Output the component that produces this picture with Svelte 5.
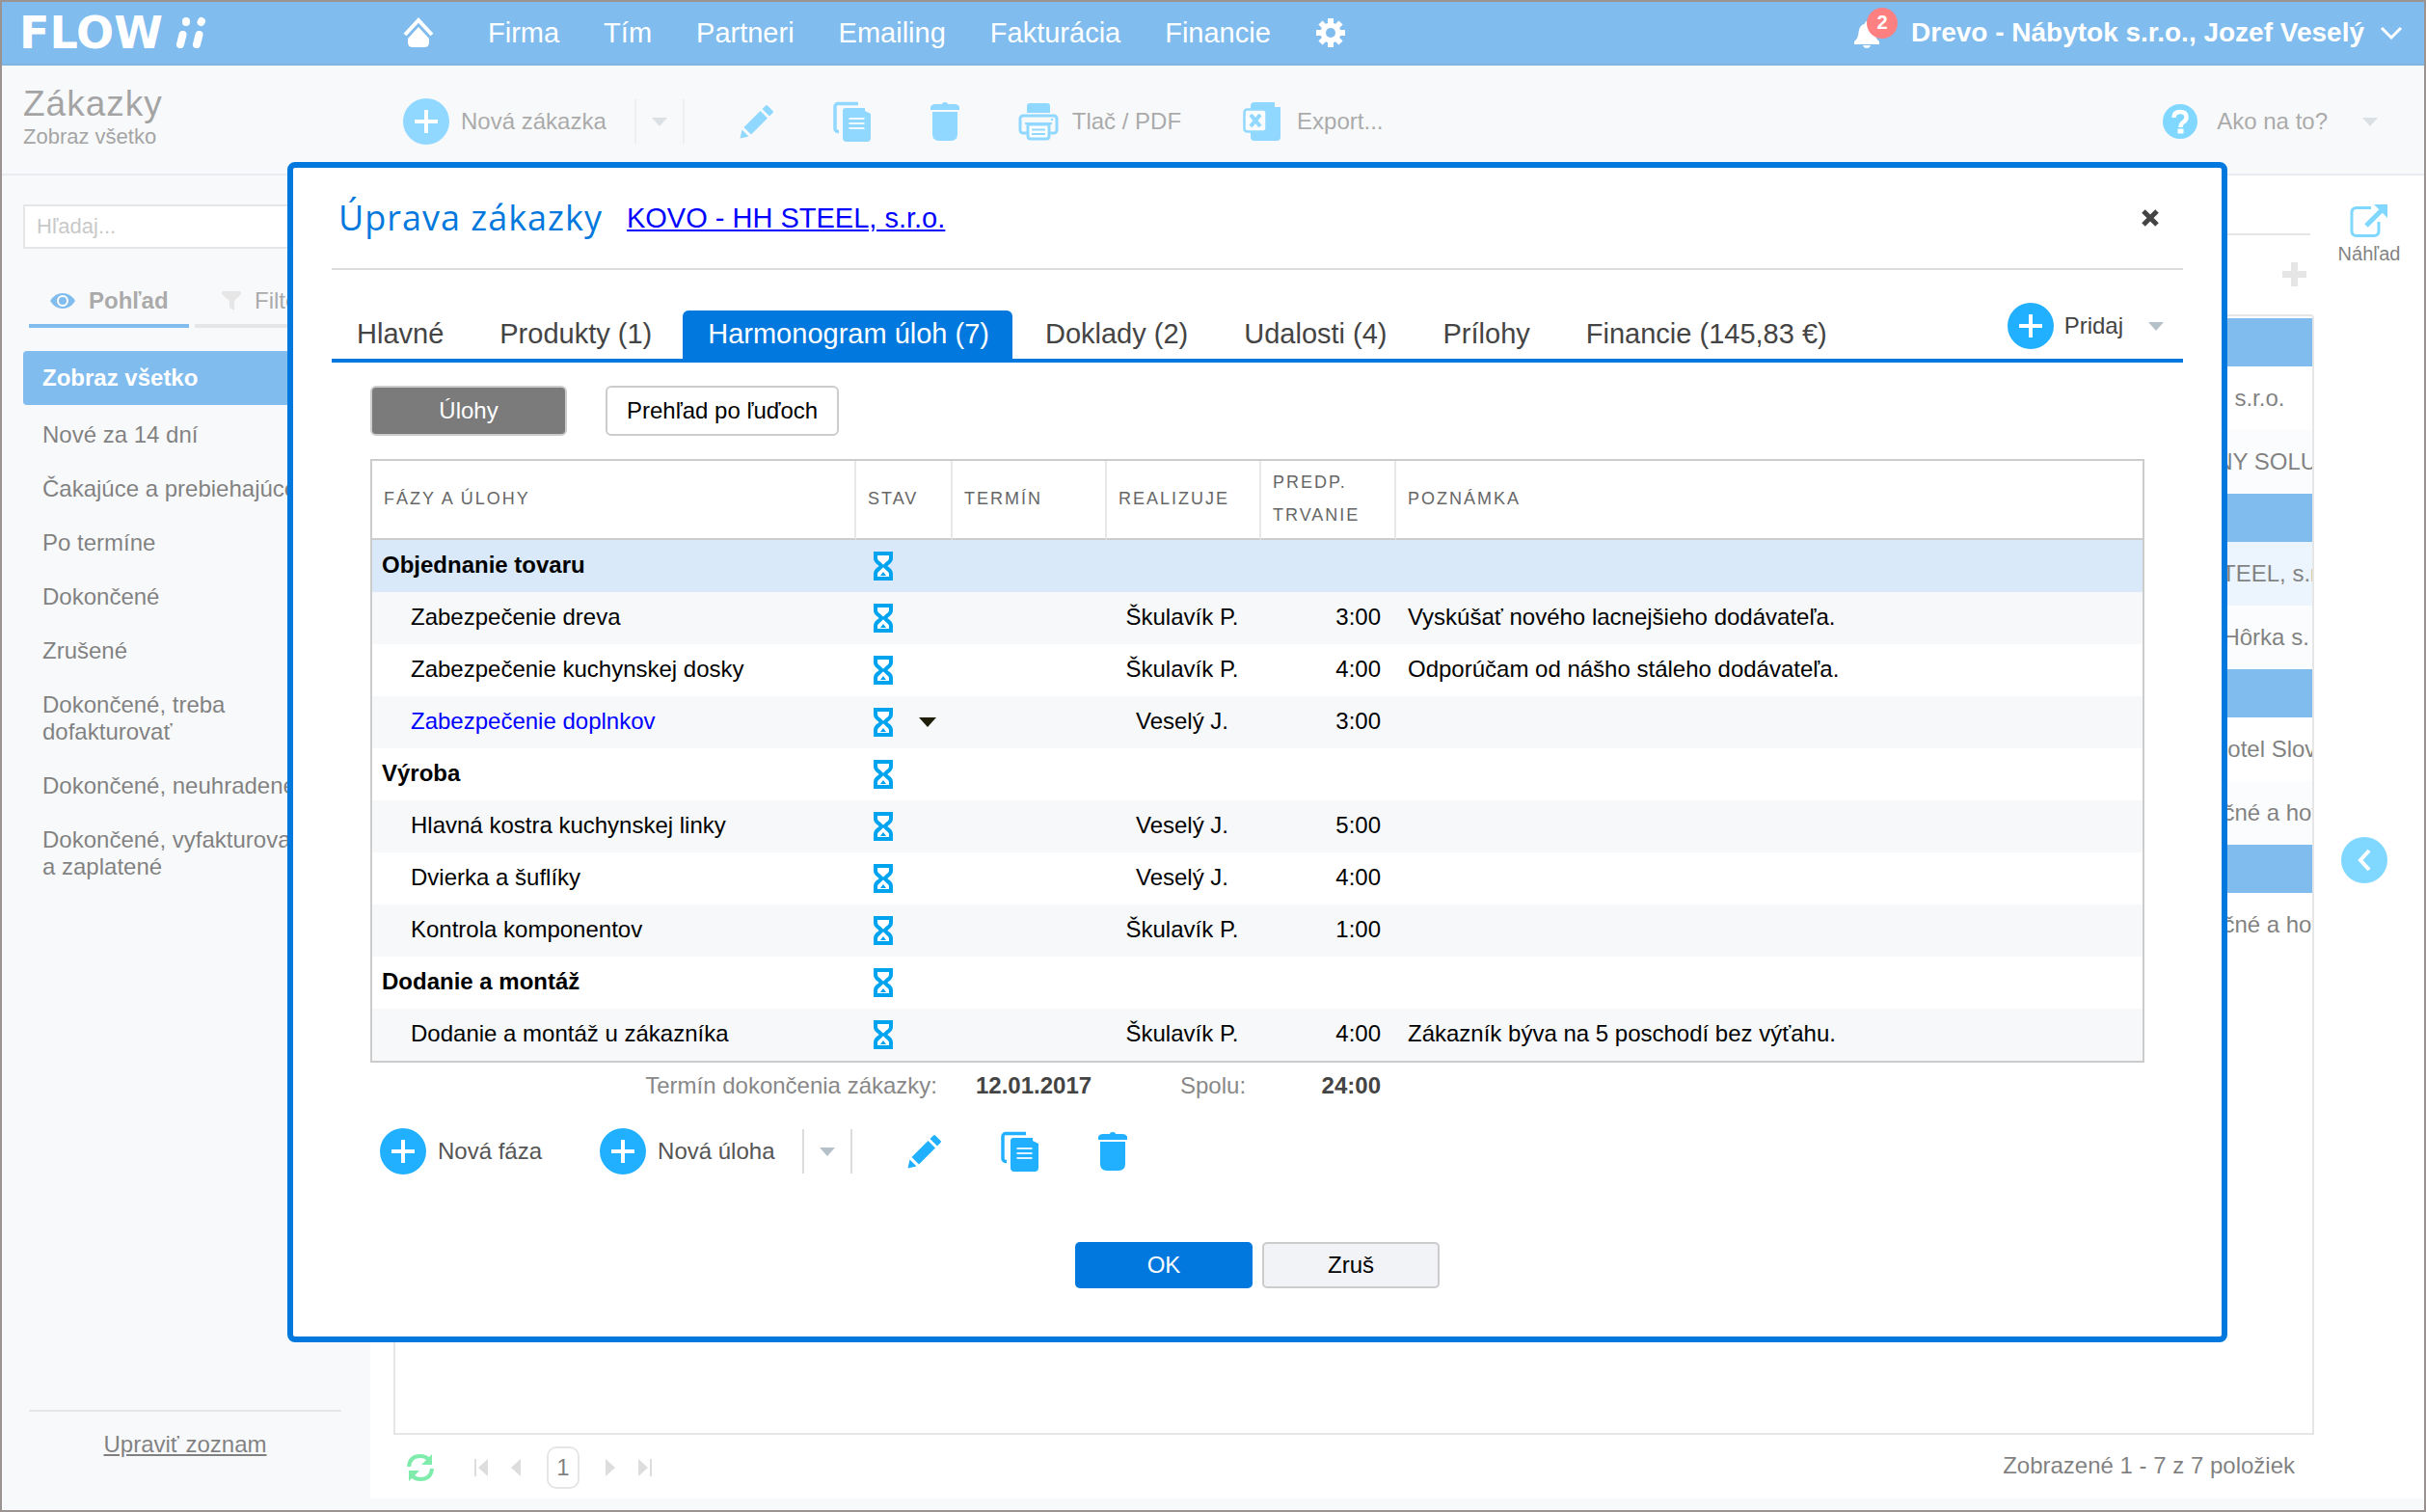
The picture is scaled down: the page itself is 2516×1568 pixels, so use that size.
<script>
  const menu = ["Firma", "Tím", "Partneri", "Emailing", "Fakturácia", "Financie"];

  const views = [
    "Zobraz všetko",
    "Nové za 14 dní",
    "Čakajúce a prebiehajúce",
    "Po termíne",
    "Dokončené",
    "Zrušené",
    "Dokončené, treba dofakturovať",
    "Dokončené, neuhradené",
    "Dokončené, vyfakturované a zaplatené",
  ];

  const groups = [
    [{ name: "Stavby Novák, s.r.o." }, { name: "ABC COMPANY SOLUTIONS" }],
    [{ name: "KOVO - HH STEEL, s.r.o.", selected: true }, { name: "Autodoprava, Hôrka s. r.o." }],
    [{ name: "Wellness 24 Hotel Slovan" }, { name: "Max Reštauračné a hotelové" }],
    [{ name: "Max Reštauračné a hotelové" }],
  ];

  const tabs = [
    "Hlavné",
    "Produkty (1)",
    "Harmonogram úloh (7)",
    "Doklady (2)",
    "Udalosti (4)",
    "Prílohy",
    "Financie (145,83 €)",
  ];

  const rows = [
    { name: "Objednanie tovaru", phase: true, selected: true },
    { name: "Zabezpečenie dreva", who: "Škulavík P.", time: "3:00", note: "Vyskúšať nového lacnejšieho dodávateľa." },
    { name: "Zabezpečenie kuchynskej dosky", who: "Škulavík P.", time: "4:00", note: "Odporúčam od nášho stáleho dodávateľa." },
    { name: "Zabezpečenie doplnkov", who: "Veselý J.", time: "3:00", hover: true },
    { name: "Výroba", phase: true },
    { name: "Hlavná kostra kuchynskej linky", who: "Veselý J.", time: "5:00" },
    { name: "Dvierka a šuflíky", who: "Veselý J.", time: "4:00" },
    { name: "Kontrola komponentov", who: "Škulavík P.", time: "1:00" },
    { name: "Dodanie a montáž", phase: true },
    { name: "Dodanie a montáž u zákazníka", who: "Škulavík P.", time: "4:00", note: "Zákazník býva na 5 poschodí bez výťahu." },
  ];

  let view = $state(views[0]);
  let tab = $state(tabs[2]);
  let search = $state("");
</script>

{#snippet plus()}
  <svg width="48" height="48" viewBox="0 0 48 48">
    <circle cx="24" cy="24" r="24" fill="#21b0ff" />
    <path d="M24 12v24M12 24h24" stroke="#fff" stroke-width="4" />
  </svg>
{/snippet}

{#snippet caret()}
  <svg width="16" height="9" viewBox="0 0 16 9"><path d="M0 0h16L8 9z" fill="#b4c1c9" /></svg>
{/snippet}

{#snippet pencil()}
  <svg width="36" height="36" viewBox="0 0 36 36" fill="#21b0ff">
    <path d="M27 1.500l1.500-.5 6.500 6.500-.5 1.500-3.500 3.500-7.500-7.500z" />
    <path d="M21.500 7l7.500 7.500L12 31.500 4.500 24z" />
    <path d="M2.500 26.500l7 7L.500 35.500z" />
  </svg>
{/snippet}

{#snippet copy()}
  <svg width="40" height="42" viewBox="0 0 40 42">
    <path d="M26 2.500H5a3 3 0 0 0-3 3v23a3 3 0 0 0 3 3h1" fill="none" stroke="#21b0ff" stroke-width="3.500" />
    <path d="M13 7h20v3l6 3v25a4 4 0 0 1-4 4H14a4 4 0 0 1-4-4V10a3 3 0 0 1 3-3z" fill="#21b0ff" />
    <path d="M16.500 18h16M16.500 23h16M16.500 28h16" stroke="#fff" stroke-opacity=".85" stroke-width="2" />
  </svg>
{/snippet}

{#snippet trash()}
  <svg width="30" height="42" viewBox="0 0 30 42" fill="#21b0ff">
    <path d="M0 9V6q1-3 5-3h7q0-2 3-2t3 2h7q4 0 5 3v3z" />
    <path d="M2 11h26v23q0 7-7 7H9q-7 0-7-7z" />
  </svg>
{/snippet}

{#snippet hourglass()}
  <svg width="22" height="32" viewBox="0 0 22 32" role="img" aria-label="Čaká">
    <path d="M3 3h16v5q0 3-4 5.500L12.500 16l2.500 2.500Q19 21 19 24v5H3v-5q0-3 4-5.500L9.500 16 7 13.500Q3 11 3 8z" fill="#fff" stroke="#00a3ee" stroke-width="4" />
    <path d="M1 3h20M1 29h20" stroke="#00a3ee" stroke-width="4" />
    <path d="M11 22l3 4H8z" fill="#00a3ee" />
  </svg>
{/snippet}

<div class="page">
  <header>
    <a class="logo" href="/" aria-label="FLOWii">
      <span>FLOW</span>
      <svg width="34" height="34" viewBox="0 0 34 34" stroke="#fff" stroke-linecap="round" stroke-width="8">
        <path d="M12 5v1M28 5l-.500 1M8.500 19L6 29M25.500 19L23 29" />
      </svg>
    </a>
    <nav>
      <a class="home" href="/" aria-label="Domov">
        <svg width="32" height="32" viewBox="0 0 32 32">
          <path d="M2 18L16 3l14 15" fill="none" stroke="#fff" stroke-width="4" />
          <path d="M16 10l11 12v4q0 5-5 5H10q-5 0-5-5v-4z" fill="#fff" />
        </svg>
      </a>
      {#each menu as item}
        <a href="/">{item}</a>
      {/each}
      <a href="/" aria-label="Nastavenia">
        <svg width="32" height="32" viewBox="0 0 32 32">
          <g stroke="#fff" stroke-width="6">
            <path d="M16 1v30M1 16h30M5.500 5.500l21 21M26.500 5.500l-21 21" />
          </g>
          <circle cx="16" cy="16" r="10.500" fill="#fff" />
          <circle cx="16" cy="16" r="5" fill="#0078dd" />
        </svg>
      </a>
    </nav>
    <button class="bell" aria-label="Upozornenia">
      <svg width="28" height="28" viewBox="0 0 28 28" fill="#fff">
        <path d="M14 0q2 0 2 2.500 6 2 6.500 9T27 21v3H1v-3q4-2.500 4.500-9.500T12 2.500Q12 0 14 0z" />
        <path d="M10 25h8q-1 3-4 3t-4-3z" />
      </svg>
      <span class="badge">2</span>
    </button>
    <button class="user">
      Drevo - Nábytok s.r.o., Jozef Veselý
      <svg width="24" height="14" viewBox="0 0 24 14"><path d="M2 2l10 10L22 2" fill="none" stroke="#fff" stroke-width="3" /></svg>
    </button>
  </header>

  <div class="toolbar">
    <div class="heading">
      <h1>Zákazky</h1>
      <p>Zobraz všetko</p>
    </div>
    <button class="labelled">{@render plus()}Nová zákazka</button>
    <button class="drop" aria-label="Ďalšie možnosti">{@render caret()}</button>
    <div class="tools">
      <button aria-label="Upraviť">{@render pencil()}</button>
      <button aria-label="Kopírovať">{@render copy()}</button>
      <button aria-label="Vymazať">{@render trash()}</button>
    </div>
    <button class="labelled print">
      <svg width="42" height="40" viewBox="0 0 42 40">
        <path d="M9 11V4q0-3 3-3h18q3 0 3 3v7z" fill="#21b0ff" />
        <rect x="2" y="14" width="38" height="18" rx="3" fill="none" stroke="#21b0ff" stroke-width="3" />
        <path d="M7 22h28M34 18h2" stroke="#21b0ff" stroke-width="2" />
        <path d="M10 23h22v12q0 3-3 3H13q-3 0-3-3z" fill="#fff" stroke="#21b0ff" stroke-width="3" />
        <path d="M14 28.500h14M14 33h14" stroke="#21b0ff" stroke-width="2" />
      </svg>
      Tlač / PDF
    </button>
    <button class="labelled export">
      <svg width="40" height="42" viewBox="0 0 40 42">
        <path d="M12 1h21v5h6v31q0 4-4 4H12q-4 0-4-4V5q0-4 4-4z" fill="#21b0ff" />
        <rect x="1.500" y="8.500" width="23" height="23" rx="3" fill="#f4f8fc" stroke="#21b0ff" stroke-width="2.500" />
        <path d="M8 14l10 12M18 14L8 26" stroke="#21b0ff" stroke-width="4" />
      </svg>
      Export...
    </button>
    <button class="labelled help">
      <svg width="36" height="36" viewBox="0 0 36 36">
        <circle cx="18" cy="18" r="18" fill="#00aeff" />
        <path d="M11.500 14q0-6 6.500-6t6.500 5.500q0 3-3 5T18.500 24" fill="none" stroke="#fff" stroke-width="4.500" />
        <path d="M15.500 25.500h6v5h-6z" fill="#fff" />
      </svg>
      <span>Ako na to?</span>
      {@render caret()}
    </button>
  </div>

  <div class="content">
    <aside>
      <input type="search" placeholder="Hľadaj..." aria-label="Hľadaj" bind:value={search} />
      <div class="switch">
        <button class="on">
          <svg width="26" height="18" viewBox="0 0 26 18">
            <path d="M0 9Q5 1 13 1t13 8q-5 8-13 8T0 9z" fill="#0078dd" />
            <circle cx="13" cy="9" r="5" fill="#0078dd" stroke="#fff" stroke-width="2" />
          </svg>
          Pohľad
        </button>
        <button>
          <svg width="20" height="20" viewBox="0 0 20 20"><path d="M0 0h20v3l-7 7v10l-5-3v-7L0 3z" fill="#ccc" /></svg>
          Filter
        </button>
      </div>
      <ul>
        {#each views as item}
          <li><button class:active={item === view} onclick={() => (view = item)}>{item}</button></li>
        {/each}
      </ul>
      <div class="edit-list"><a href="/">Upraviť zoznam</a></div>
    </aside>

    <main>
      <div class="list">
        <div class="list-top"></div>
        <div class="list-filter">
          <button aria-label="Pridať filter">
            <svg width="25" height="25" viewBox="0 0 25 25"><path d="M12.500 0v25M0 12.500h25" stroke="#ccc" stroke-width="7" /></svg>
          </button>
        </div>
        <div class="grid">
          <table>
            <colgroup><col /><col class="client" /></colgroup>
            {#each groups as group}
              <tbody>
                <tr class="band"><td colspan="2"></td></tr>
                {#each group as order}
                  <tr class:selected={order.selected}><td></td><td>{order.name}</td></tr>
                {/each}
              </tbody>
            {/each}
          </table>
        </div>
        <div class="pager">
          <button aria-label="Obnoviť">
            <svg width="28" height="30" viewBox="0 0 28 30" fill="none" stroke="#00d858" stroke-width="4">
              <path d="M2 14Q3 3 14 3q5 0 8 3M26 16q-1 11-12 11-5 0-8-3" />
              <path d="M26 1v11H15zM2 29V18h11z" fill="#00d858" stroke="none" />
            </svg>
          </button>
          <button class="first" aria-label="Prvá"><svg width="14" height="18" viewBox="0 0 14 18" fill="#bbb"><path d="M0 0h2v18H0zM14 0v18L4 9z" /></svg></button>
          <button class="prev" aria-label="Predchádzajúca"><svg width="10" height="18" viewBox="0 0 10 18" fill="#bbb"><path d="M10 0v18L0 9z" /></svg></button>
          <button class="current">1</button>
          <button aria-label="Nasledujúca"><svg width="10" height="18" viewBox="0 0 10 18" fill="#bbb"><path d="M0 0v18l10-9z" /></svg></button>
          <button class="last" aria-label="Posledná"><svg width="14" height="18" viewBox="0 0 14 18" fill="#bbb"><path d="M12 0h2v18h-2zM0 0v18l10-9z" /></svg></button>
          <span>Zobrazené 1 - 7 z 7 položiek</span>
        </div>
      </div>
      <div class="rail">
        <button class="preview">
          <svg width="40" height="36" viewBox="0 0 40 36">
            <path d="M22 4.500H7q-5 0-5 5v19q0 5 5 5h18q5 0 5-5V19" fill="none" stroke="#00aeff" stroke-width="3" />
            <path d="M17 23L33 7" stroke="#00aeff" stroke-width="5" />
            <path d="M25 1h14v14z" fill="#00aeff" />
          </svg>
          Náhľad
        </button>
        <button class="toggle" aria-label="Rozbaliť">
          <svg width="14" height="24" viewBox="0 0 14 24"><path d="M12 2L3 12l9 10" fill="none" stroke="#fff" stroke-width="4" /></svg>
        </button>
      </div>
    </main>
  </div>

  <div class="overlay">
    <div class="modal" role="dialog" aria-labelledby="dialog-title">
      <div class="modal-head">
        <h2 id="dialog-title">Úprava zákazky</h2>
        <a href="/">KOVO - HH STEEL, s.r.o.</a>
        <button aria-label="Zavrieť">
          <svg width="18" height="18" viewBox="0 0 18 18"><path d="M2 2l14 14M16 2L2 16" stroke="#444" stroke-width="5" /></svg>
        </button>
      </div>

      <div class="tabs">
        {#each tabs as item}
          <button class:active={item === tab} onclick={() => (tab = item)}>{item}</button>
        {/each}
        <button class="add">{@render plus()}<span>Pridaj</span>{@render caret()}</button>
      </div>

      <div class="modal-body">
        <div class="modes">
          <button class="mode on">Úlohy</button>
          <button class="mode">Prehľad po ľuďoch</button>
        </div>

        <table class="tasks">
          <colgroup>
            <col class="c-name" /><col class="c-state" /><col class="c-date" />
            <col class="c-who" /><col class="c-time" /><col />
          </colgroup>
          <thead>
            <tr>
              <th>Fázy a úlohy</th>
              <th>Stav</th>
              <th>Termín</th>
              <th>Realizuje</th>
              <th>Predp. trvanie</th>
              <th>Poznámka</th>
            </tr>
          </thead>
          <tbody>
            {#each rows as row}
              <tr class:phase={row.phase} class:selected={row.selected} class:hover={row.hover}>
                <td>{row.name}</td>
                <td class="state">
                  <div>
                    {@render hourglass()}
                    {#if row.hover}
                      <svg width="18" height="10" viewBox="0 0 18 10"><path d="M0 0h18L9 10z" fill="#1e1e0a" /></svg>
                    {/if}
                  </div>
                </td>
                <td></td>
                <td class="who">{row.who ?? ""}</td>
                <td class="time">{row.time ?? ""}</td>
                <td>{row.note ?? ""}</td>
              </tr>
            {/each}
          </tbody>
        </table>

        <div class="summary">
          <span>Termín dokončenia zákazky:</span>
          <strong>12.01.2017</strong>
          <span>Spolu:</span>
          <strong>24:00</strong>
        </div>

        <div class="actions">
          <button class="labelled">{@render plus()}Nová fáza</button>
          <button class="labelled">{@render plus()}Nová úloha</button>
          <button class="drop" aria-label="Ďalšie možnosti">{@render caret()}</button>
          <div class="tools">
            <button aria-label="Upraviť">{@render pencil()}</button>
            <button aria-label="Kopírovať">{@render copy()}</button>
            <button aria-label="Vymazať">{@render trash()}</button>
          </div>
        </div>
      </div>

      <div class="confirm">
        <button class="ok">OK</button>
        <button class="cancel">Zruš</button>
      </div>
    </div>
  </div>
</div>

<style>
  :global(body) {
    margin: 0;
  }

  .page,
  .page * {
    box-sizing: border-box;
  }

  .page {
    position: relative;
    display: flex;
    flex-direction: column;
    min-height: 100vh;
    border: 2px solid #9b9392;
    background: #fff;
    color: #000;
    font: 24px/28px "Liberation Sans", Arial, sans-serif;
  }

  button {
    display: flex;
    align-items: center;
    padding: 0;
    border: 0;
    background: none;
    color: inherit;
    font: inherit;
    white-space: nowrap;
    cursor: pointer;
  }

  svg {
    display: block;
    flex: none;
  }

  h1,
  h2,
  p,
  ul {
    margin: 0;
    padding: 0;
    font-weight: normal;
    list-style: none;
  }

  header {
    display: flex;
    align-items: center;
    height: 66px;
    padding-right: 22px;
    border-bottom: 2px solid #0068c2;
    background: #0078dd;
    color: #fff;
  }

  .logo {
    display: flex;
    align-items: center;
    gap: 12px;
    width: 416px;
    padding-left: 18px;
    color: #fff;
    font: bold 46px/64px "DejaVu Sans", sans-serif;
    text-decoration: none;
  }

  nav {
    display: flex;
    align-items: center;
    gap: 46px;
    font-size: 29px;
  }

  nav a {
    color: #fff;
    text-decoration: none;
  }

  .home {
    margin-right: 10px;
  }

  .bell {
    position: relative;
    margin-left: auto;
    padding: 4px 20px 0 0;
  }

  .badge {
    position: absolute;
    top: -10px;
    left: 14px;
    width: 32px;
    height: 32px;
    border-radius: 50%;
    background: #f00;
    font: bold 20px/30px "Liberation Sans", Arial, sans-serif;
    text-align: center;
  }

  .user {
    gap: 16px;
    margin-left: 12px;
    font-size: 28px;
    font-weight: bold;
  }

  .toolbar {
    display: flex;
    align-items: center;
    height: 114px;
    padding-top: 4px;
    border-bottom: 2px solid #d2d9e1;
    background: #f1f3f7;
    color: #555;
  }

  .heading {
    width: 416px;
    padding: 0 0 8px 22px;
    color: #484848;
    font-size: 22px;
  }

  h1 {
    font-size: 37px;
    line-height: 40px;
    letter-spacing: 1px;
  }

  .labelled {
    gap: 12px;
  }

  .drop {
    justify-content: center;
    width: 52px;
    height: 46px;
    margin-left: 29px;
    border: solid #dcdcdc;
    border-width: 0 2px;
  }

  .tools {
    display: flex;
    align-items: center;
    gap: 61px;
    margin-left: 57px;
  }

  .print {
    gap: 14px;
    margin-left: 61px;
  }

  .export {
    gap: 16px;
    margin-left: 64px;
  }

  .help {
    gap: 20px;
    margin: 0 48px 0 auto;
  }

  .help span {
    margin-right: 16px;
  }

  .content {
    display: flex;
    flex: 1;
  }

  aside {
    display: flex;
    flex: none;
    flex-direction: column;
    width: 382px;
    padding: 30px 22px 54px;
    background: #f1f3f7;
  }

  input {
    width: 100%;
    height: 46px;
    padding: 0 12px;
    border: 2px solid #ccc;
    background: #fff;
    font: 22px/26px "Liberation Sans", Arial, sans-serif;
  }

  input::placeholder {
    color: #919191;
  }

  .switch {
    display: flex;
    gap: 6px;
    margin: 32px 0 24px 6px;
    color: #555;
  }

  .switch button {
    flex: none;
    gap: 14px;
    width: 166px;
    height: 50px;
    padding: 0 0 2px 28px;
    border-bottom: 4px solid #ccc;
  }

  .switch .on {
    padding-left: 22px;
    border-color: #0078dd;
    font-weight: bold;
  }

  ul {
    flex: 1;
  }

  li button {
    width: 100%;
    padding: 14px 20px;
    text-align: left;
    white-space: normal;
  }

  li .active {
    margin-bottom: 3px;
    border-radius: 4px;
    background: #0078dd;
    color: #fff;
    font-weight: bold;
  }

  .edit-list {
    margin: 0 8px 0 6px;
    padding-top: 20px;
    border-top: 2px solid #ccc;
    text-align: center;
  }

  .edit-list a {
    color: #000;
  }

  main {
    display: flex;
    flex: 1;
    min-width: 0;
    border-bottom: 12px solid #f1f3f7;
  }

  .list {
    display: flex;
    flex: 1;
    flex-direction: column;
    min-width: 0;
    padding-left: 24px;
  }

  .list-top {
    height: 62px;
    margin-right: 4px;
    border-bottom: 2px solid #ccc;
  }

  .list-filter {
    display: flex;
    justify-content: flex-end;
    height: 82px;
    padding: 0 8px 2px 0;
  }

  .grid {
    flex: 1;
    padding-top: 2px;
    border: 2px solid #ccc;
    border-radius: 4px 4px 0 0;
  }

  table {
    width: 100%;
    border-spacing: 0;
    table-layout: fixed;
  }

  td,
  th {
    padding: 0;
  }

  .client {
    width: 242px;
  }

  .grid td {
    height: 66px;
    overflow: hidden;
    white-space: nowrap;
  }

  .grid tr:nth-child(odd) {
    background: #f7f8fb;
  }

  .grid tr.selected {
    background: #d9e8fb;
  }

  .grid tr.band {
    background: #0078dd;
  }

  .grid .band td {
    height: 50px;
  }

  .pager {
    display: flex;
    align-items: center;
    height: 66px;
    padding: 2px 20px 0 14px;
  }

  .pager span {
    margin-left: auto;
    padding-bottom: 4px;
  }

  .first {
    margin-left: 42px;
  }

  .prev,
  .last {
    margin-left: 24px;
  }

  .current {
    justify-content: center;
    width: 34px;
    height: 44px;
    margin: 0 27px;
    border: 2px solid #ccc;
    border-radius: 10px;
  }

  .rail {
    display: flex;
    flex: none;
    flex-direction: column;
    align-items: center;
    width: 114px;
    padding-top: 29px;
  }

  .preview {
    flex-direction: column;
    gap: 2px;
    font-size: 20px;
  }

  .toggle {
    justify-content: center;
    width: 48px;
    height: 48px;
    margin: 591px 10px 0 0;
    border-radius: 50%;
    background: #00aeff;
  }

  .overlay {
    position: absolute;
    inset: 0;
    padding: 166px 204px 0 296px;
    background: rgba(255, 255, 255, 0.5);
  }

  .modal {
    padding: 0 40px 50px;
    border: 6px solid #0078dd;
    border-radius: 8px;
    background: #fff;
  }

  .modal-head {
    display: flex;
    align-items: center;
    height: 106px;
    padding: 0 25px 0 7px;
    border-bottom: 2px solid #dcdcdc;
  }

  h2 {
    color: #0078dd;
    font: 500 36px/48px "Open Sans", "Noto Sans", sans-serif;
    letter-spacing: 1px;
  }

  .modal-head a {
    margin-left: 25px;
    color: #00f;
    font-size: 29px;
  }

  .modal-head button {
    margin-left: auto;
  }

  .tabs {
    display: flex;
    align-items: flex-end;
    gap: 8px;
    height: 96px;
    border-bottom: 4px solid #0078dd;
    color: #444;
    font-size: 29px;
  }

  .tabs button {
    height: 50px;
    padding: 0 24px 2px 26px;
    border-radius: 6px 6px 0 0;
  }

  .tabs .active {
    background: #0078dd;
    color: #fff;
  }

  .tabs .add {
    gap: 11px;
    height: 48px;
    margin: 0 0 10px auto;
    padding: 0 20px 0 0;
    font-size: 24px;
  }

  .add span {
    margin-right: 15px;
  }

  .modal-body {
    padding: 24px 40px 0;
  }

  .modes {
    display: flex;
    gap: 40px;
    margin-bottom: 24px;
  }

  .mode {
    justify-content: center;
    min-width: 204px;
    height: 52px;
    padding: 0 20px;
    border: 2px solid #ccc;
    border-radius: 6px;
  }

  .mode.on {
    background: #7b7b7b;
    color: #fff;
  }

  .tasks {
    border: 2px solid #ccc;
  }

  .c-name {
    width: 502px;
  }

  .c-state {
    width: 100px;
  }

  .c-date,
  .c-who {
    width: 160px;
  }

  .c-time {
    width: 140px;
  }

  th {
    height: 82px;
    padding: 0 12px 3px;
    border-right: 2px solid #e8e8e8;
    border-bottom: 2px solid #ccc;
    color: #666;
    font-size: 18px;
    font-weight: normal;
    line-height: 34px;
    letter-spacing: 2px;
    text-align: left;
    text-transform: uppercase;
  }

  th:last-child {
    border-right: 0;
  }

  .tasks td {
    height: 54px;
    padding: 0 12px 2px;
  }

  .tasks td:first-child {
    padding-left: 40px;
  }

  .tasks tbody tr:nth-child(even) {
    background: #f6f8fa;
  }

  .tasks tbody .selected {
    background: #d9e9f9;
  }

  .tasks .phase td:first-child {
    padding-left: 10px;
    font-weight: bold;
  }

  .tasks .hover td:first-child {
    color: #00f;
  }

  .tasks td.state {
    padding: 0 0 0 17px;
  }

  .state div {
    display: flex;
    align-items: center;
    gap: 26px;
  }

  .tasks td.who {
    padding-right: 16px;
    text-align: center;
  }

  .tasks td.time {
    padding-right: 16px;
    text-align: right;
  }

  .summary {
    display: grid;
    grid-template-columns: 588px 172px 80px 88px;
    gap: 40px;
    color: #888;
    line-height: 48px;
  }

  .summary span:first-child,
  .summary strong:last-child {
    text-align: right;
  }

  .summary strong {
    color: #444;
  }

  .actions {
    display: flex;
    align-items: center;
    margin-top: 20px;
    padding-left: 10px;
    color: #555;
  }

  .actions .labelled + .labelled {
    margin-left: 60px;
  }

  .confirm {
    display: flex;
    justify-content: center;
    gap: 10px;
    margin-top: 70px;
  }

  .confirm button {
    justify-content: center;
    width: 184px;
    height: 48px;
    border-radius: 5px;
  }

  .confirm .ok {
    background: #0078dd;
    color: #fff;
  }

  .confirm .cancel {
    border: 2px solid #ccc;
    background: #f1f3f7;
  }
</style>
